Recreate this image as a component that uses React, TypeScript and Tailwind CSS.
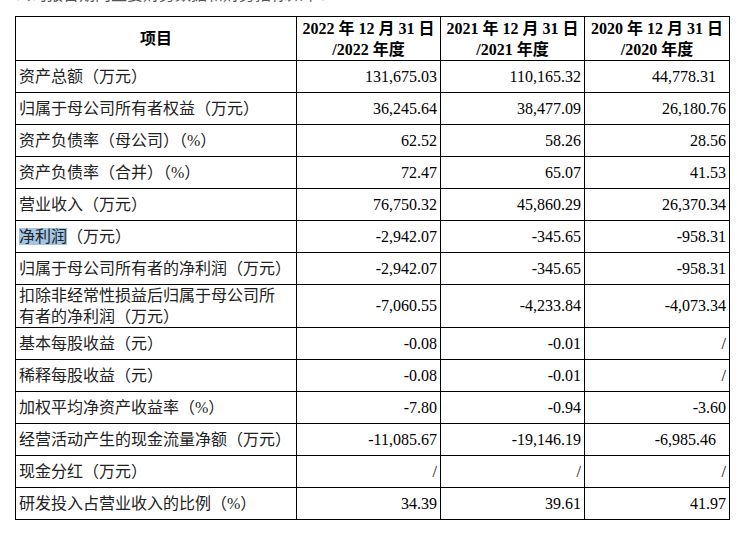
const rows: { label: React.ReactNode; v: string[]; tall?: boolean; wide?: boolean }[] = [
  { label: '资产总额（万元）', v: ['131,675.03', '110,165.32', '44,778.31'], wide: true },
  { label: '归属于母公司所有者权益（万元）', v: ['36,245.64', '38,477.09', '26,180.76'] },
  { label: '资产负债率（母公司）（%）', v: ['62.52', '58.26', '28.56'] },
  { label: '资产负债率（合并）（%）', v: ['72.47', '65.07', '41.53'] },
  { label: '营业收入（万元）', v: ['76,750.32', '45,860.29', '26,370.34'] },
  {
    label: (
      <>
        <span className="bg-[#a3c6e6]">净利润</span>（万元）
      </>
    ),
    v: ['-2,942.07', '-345.65', '-958.31'],
  },
  { label: '归属于母公司所有者的净利润（万元）', v: ['-2,942.07', '-345.65', '-958.31'] },
  {
    label: (
      <>
        扣除非经常性损益后归属于母公司所
        <br />
        有者的净利润（万元）
      </>
    ),
    v: ['-7,060.55', '-4,233.84', '-4,073.34'],
    tall: true,
  },
  { label: '基本每股收益（元）', v: ['-0.08', '-0.01', '/'] },
  { label: '稀释每股收益（元）', v: ['-0.08', '-0.01', '/'] },
  { label: '加权平均净资产收益率（%）', v: ['-7.80', '-0.94', '-3.60'] },
  { label: '经营活动产生的现金流量净额（万元）', v: ['-11,085.67', '-19,146.19', '-6,985.46'], wide: true },
  { label: '现金分红（万元）', v: ['/', '/', '/'] },
  { label: '研发投入占营业收入的比例（%）', v: ['34.39', '39.61', '41.97'] },
];

const years = ['2022', '2021', '2020'];

export default function App() {
  return (
    <div
      className="w-[750px] h-[536px] bg-white text-black overflow-hidden"
      style={{ fontFamily: '"Liberation Serif", "Noto Sans CJK SC", serif' }}
    >
      {/* 上方被截断的标题行 */}
      <div className="h-[5px] overflow-hidden pl-[15px]">
        <div className="-mt-[15px] text-[16px] leading-[20px] text-[#555]">
          公司报告期内主要财务数据和财务指标如下：
        </div>
      </div>

      <div className="pl-[15px] pt-[11px]">
        <table className="table-fixed border-collapse w-[714px] text-[16px]">
          <colgroup>
            <col className="w-[281px]" />
            <col className="w-[144px]" />
            <col className="w-[144px]" />
            <col className="w-[145px]" />
          </colgroup>
          <thead>
            <tr className="h-[44px]">
              <th className="border border-black font-bold text-center align-middle">项目</th>
              {years.map((y) => (
                <th key={y} className="border border-black font-bold text-center align-middle leading-[21px] p-0">
                  {y} 年 12 月 31 日
                  <br />/{y} 年度
                </th>
              ))}
            </tr>
          </thead>
          <tbody>
            {rows.map((r, i) => (
              <tr key={i} className={r.tall ? 'h-[43px]' : 'h-[32px]'}>
                <td className="border border-black pl-[3px] pr-0 py-0 align-middle text-[#222] leading-[21px] whitespace-nowrap">
                  {r.label}
                </td>
                {r.v.map((val, j) => (
                  <td
                    key={j}
                    className={
                      'border border-black py-0 text-right align-middle ' +
                      (j === 2 && r.wide ? 'pr-[13px]' : 'pr-[3px]')
                    }
                  >
                    {val}
                  </td>
                ))}
              </tr>
            ))}
          </tbody>
        </table>
      </div>
    </div>
  );
}
